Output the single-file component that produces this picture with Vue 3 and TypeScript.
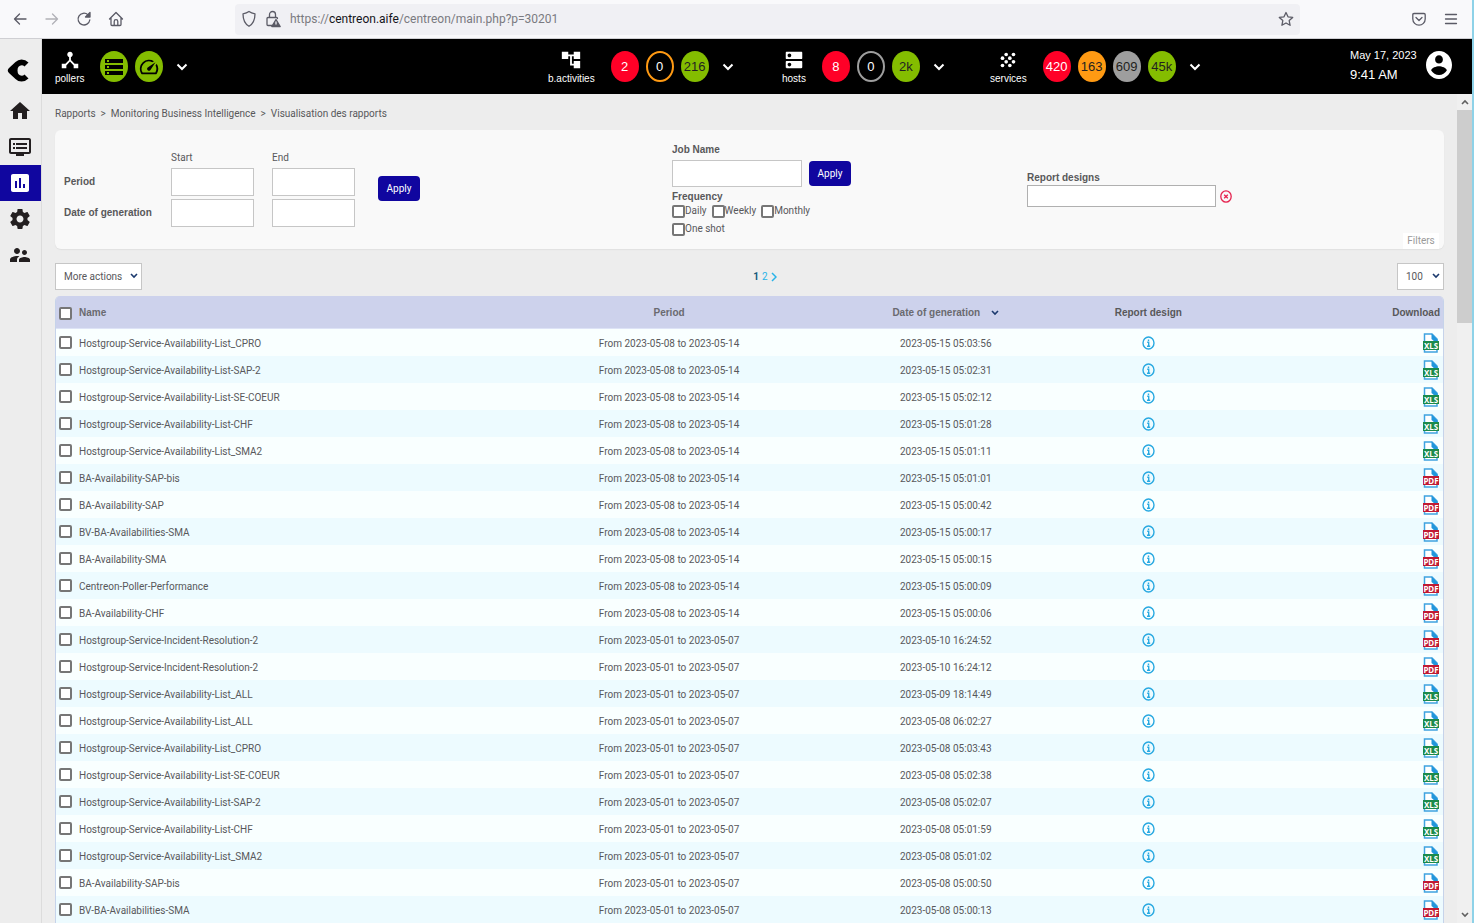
<script setup lang="ts">
import { ref } from 'vue'

type Tone = 'red' | 'green' | 'orange' | 'grey' | 'ring-orange' | 'ring-grey'
interface Counter { value: string; tone: Tone }
interface StatusGroup { label: string; icon: 'tree' | 'hosts' | 'grain'; counters: Counter[] }
interface Report { name: string; period: string; date: string; type: 'XLS' | 'PDF' }

const groups: StatusGroup[] = [
  { label: 'b.activities', icon: 'tree', counters: [
    { value: '2', tone: 'red' }, { value: '0', tone: 'ring-orange' }, { value: '216', tone: 'green' }] },
  { label: 'hosts', icon: 'hosts', counters: [
    { value: '8', tone: 'red' }, { value: '0', tone: 'ring-grey' }, { value: '2k', tone: 'green' }] },
  { label: 'services', icon: 'grain', counters: [
    { value: '420', tone: 'red' }, { value: '163', tone: 'orange' }, { value: '609', tone: 'grey' }, { value: '45k', tone: 'green' }] },
]

const week19 = 'From 2023-05-08 to 2023-05-14'
const week18 = 'From 2023-05-01 to 2023-05-07'
const reports: Report[] = [
  { name: 'Hostgroup-Service-Availability-List_CPRO', period: week19, date: '2023-05-15 05:03:56', type: 'XLS' },
  { name: 'Hostgroup-Service-Availability-List-SAP-2', period: week19, date: '2023-05-15 05:02:31', type: 'XLS' },
  { name: 'Hostgroup-Service-Availability-List-SE-COEUR', period: week19, date: '2023-05-15 05:02:12', type: 'XLS' },
  { name: 'Hostgroup-Service-Availability-List-CHF', period: week19, date: '2023-05-15 05:01:28', type: 'XLS' },
  { name: 'Hostgroup-Service-Availability-List_SMA2', period: week19, date: '2023-05-15 05:01:11', type: 'XLS' },
  { name: 'BA-Availability-SAP-bis', period: week19, date: '2023-05-15 05:01:01', type: 'PDF' },
  { name: 'BA-Availability-SAP', period: week19, date: '2023-05-15 05:00:42', type: 'PDF' },
  { name: 'BV-BA-Availabilities-SMA', period: week19, date: '2023-05-15 05:00:17', type: 'PDF' },
  { name: 'BA-Availability-SMA', period: week19, date: '2023-05-15 05:00:15', type: 'PDF' },
  { name: 'Centreon-Poller-Performance', period: week19, date: '2023-05-15 05:00:09', type: 'PDF' },
  { name: 'BA-Availability-CHF', period: week19, date: '2023-05-15 05:00:06', type: 'PDF' },
  { name: 'Hostgroup-Service-Incident-Resolution-2', period: week18, date: '2023-05-10 16:24:52', type: 'PDF' },
  { name: 'Hostgroup-Service-Incident-Resolution-2', period: week18, date: '2023-05-10 16:24:12', type: 'PDF' },
  { name: 'Hostgroup-Service-Availability-List_ALL', period: week18, date: '2023-05-09 18:14:49', type: 'XLS' },
  { name: 'Hostgroup-Service-Availability-List_ALL', period: week18, date: '2023-05-08 06:02:27', type: 'XLS' },
  { name: 'Hostgroup-Service-Availability-List_CPRO', period: week18, date: '2023-05-08 05:03:43', type: 'XLS' },
  { name: 'Hostgroup-Service-Availability-List-SE-COEUR', period: week18, date: '2023-05-08 05:02:38', type: 'XLS' },
  { name: 'Hostgroup-Service-Availability-List-SAP-2', period: week18, date: '2023-05-08 05:02:07', type: 'XLS' },
  { name: 'Hostgroup-Service-Availability-List-CHF', period: week18, date: '2023-05-08 05:01:59', type: 'XLS' },
  { name: 'Hostgroup-Service-Availability-List_SMA2', period: week18, date: '2023-05-08 05:01:02', type: 'XLS' },
  { name: 'BA-Availability-SAP-bis', period: week18, date: '2023-05-08 05:00:50', type: 'PDF' },
  { name: 'BV-BA-Availabilities-SMA', period: week18, date: '2023-05-08 05:00:13', type: 'PDF' },
]

const frequencies = ['Daily', 'Weekly', 'Monthly', 'One shot']
const selected = ref<number[]>([])
const jobName = ref('')

function toggleAll(event: Event) {
  selected.value = (event.target as HTMLInputElement).checked ? reports.map((_, i) => i) : []
}
</script>

<template>
  <div class="window">
    <header class="browser">
      <nav class="browser-nav">
        <button type="button" aria-label="Back"><svg width="16" height="16" viewBox="0 0 16 16" class="stroke"><path d="M14 8H2.5M7.5 3l-5 5 5 5" /></svg></button>
        <button type="button" aria-label="Forward" disabled><svg width="16" height="16" viewBox="0 0 16 16" class="stroke faded"><path d="M2 8h11.5M8.500 3l5 5-5 5" /></svg></button>
        <button type="button" aria-label="Reload"><svg width="16" height="16" viewBox="0 0 16 16" class="stroke"><path d="M13.800 9a5.900 5.900 0 1 1-1.900-5.300L13.500 5" /><path d="M14 1.500V6H9.500z" class="solid" /></svg></button>
        <button type="button" aria-label="Home"><svg width="16" height="16" viewBox="0 0 16 16" class="stroke"><path d="M1.500 8 8 1.500 14.500 8M3 7v6.500q0 1 1 1h8q1 0 1-1V7M6.200 14.500v-4a1.800 1.800 0 0 1 3.600 0v4" /></svg></button>
      </nav>
      <div class="address">
        <svg width="16" height="18" viewBox="0 0 16 18" class="stroke"><path d="M8 1.500C6 3 4 3.500 2 3.800c0 6 1.500 10 6 12.500 4.500-2.500 6-6.500 6-12.500-2-.3-4-.8-6-2.300z" /></svg>
        <svg width="16" height="18" viewBox="0 0 16 18" class="stroke"><path d="M4.500 7.500v-3a3 3 0 0 1 6 0v3M7 15.500H3q-1 0-1-1v-6q0-1 1-1h8.500q1 0 1 1" /><path d="M11 9.500 6.800 16.500h8.400z" class="solid" /><path d="M11 12v2" class="mark" /></svg>
        <span class="url">https://<b>centreon.aife</b>/centreon/main.php?p=30201</span>
        <button type="button" class="star" aria-label="Bookmark"><svg width="16" height="16" viewBox="0 0 16 16" class="stroke"><path d="m8 1.500 2 4.300 4.700.6-3.500 3.200.9 4.700L8 12l-4.100 2.300.9-4.700L1.300 6.400 6 5.800z" /></svg></button>
      </div>
      <div class="browser-tools">
        <button type="button" aria-label="Save to Pocket"><svg width="16" height="16" viewBox="0 0 16 16" class="stroke"><path d="M3 2.500h10q1.200 0 1.200 1.200V8a6.200 6.200 0 0 1-12.400 0V3.700q0-1.200 1.200-1.200zM5 6.500l3 3 3-3" /></svg></button>
        <button type="button" aria-label="Menu"><svg width="16" height="16" viewBox="0 0 16 16" class="stroke"><path d="M2.500 3.500h11M2.500 8h11M2.500 12.500h11" /></svg></button>
      </div>
    </header>

    <div class="app">
      <aside class="sidebar">
        <a href="#" class="logo" aria-label="Centreon"><svg width="22" height="24" viewBox="0 0 22 24"><path d="M21.500 4.500Q18.500 1.500 14.500 1.500 11 1.500 8.500 4L2 10Q-.5 12.500 2 15l6.500 6Q11 23.500 14.500 23.500q4 0 7-3L17.500 16.500Q16.300 17.700 14.800 17.700 10.500 17.200 10.500 12.500T14.800 7.300Q16.300 7.300 17.500 8.500z" /></svg></a>
        <a href="#" aria-label="Home"><svg width="24" height="24" viewBox="0 0 24 24"><path d="M10 20v-6h4v6h5v-8h3L12 3 2 12h3v8z" /></svg></a>
        <a href="#" aria-label="Monitoring"><svg width="24" height="24" viewBox="0 0 24 24"><path d="M21 3H3c-1.100 0-2 .9-2 2v12c0 1.100.9 2 2 2h5v2h8v-2h5c1.100 0 2-.9 2-2V5c0-1.100-.9-2-2-2zm0 14H3V5h18v12zm-2-9H8v2h11V8zm0 4H8v2h11v-2zM7 8H5v2h2V8zm0 4H5v2h2v-2z" /></svg></a>
        <a href="#" class="active" aria-label="Reporting"><svg width="24" height="24" viewBox="0 0 24 24"><path d="M19 3H5c-1.100 0-2 .9-2 2v14c0 1.100.9 2 2 2h14c1.100 0 2-.9 2-2V5c0-1.100-.9-2-2-2zM9 17H7v-7h2v7zm4 0h-2V7h2v10zm4 0h-2v-4h2v4z" /></svg></a>
        <a href="#" aria-label="Configuration"><svg width="24" height="24" viewBox="0 0 24 24"><path d="M19.430 12.980c.04-.32.07-.64.07-.98s-.03-.66-.07-.98l2.110-1.650c.19-.15.24-.42.12-.64l-2-3.460c-.12-.22-.39-.3-.61-.22l-2.490 1c-.52-.4-1.080-.73-1.690-.98l-.38-2.650C14.460 2.180 14.250 2 14 2h-4c-.25 0-.46.18-.49.42l-.38 2.650c-.61.25-1.170.59-1.690.98l-2.490-1c-.23-.09-.49 0-.61.22l-2 3.460c-.13.22-.07.49.12.64l2.110 1.650c-.04.32-.07.65-.07.98s.03.66.07.98l-2.110 1.650c-.19.15-.24.42-.12.64l2 3.460c.12.22.39.3.61.22l2.490-1c.52.4 1.080.73 1.690.98l.38 2.650c.03.24.24.42.49.42h4c.25 0 .46-.18.49-.42l.38-2.650c.61-.25 1.170-.59 1.690-.98l2.490 1c.23.09.49 0 .61-.22l2-3.460c.12-.22.07-.49-.12-.64l-2.110-1.650zM12 15.500c-1.930 0-3.500-1.570-3.500-3.500s1.570-3.500 3.500-3.500 3.500 1.570 3.500 3.500-1.570 3.500-3.500 3.500z" /></svg></a>
        <a href="#" aria-label="Administration"><svg width="24" height="24" viewBox="0 0 24 24"><path d="M16.500 12c1.380 0 2.490-1.120 2.490-2.500S17.880 7 16.500 7 14 8.120 14 9.500s1.120 2.500 2.500 2.500zM9 11c1.660 0 2.990-1.340 2.990-3S10.660 5 9 5 6 6.340 6 8s1.340 3 3 3zm7.500 3c-1.830 0-5.500.92-5.500 2.750V19h11v-2.250c0-1.830-3.670-2.750-5.500-2.750zM9 13c-2.330 0-7 1.170-7 3.500V19h7v-2.250c0-.85.33-2.340 2.370-3.470C10.500 13.100 9.660 13 9 13z" /></svg></a>
      </aside>

      <div class="main">
        <div class="topbar">
          <div class="group">
            <div class="service">
              <svg width="22" height="22" viewBox="0 0 24 24"><path d="M17 16l-4-4V8.820C14.160 8.400 15 7.300 15 6c0-1.660-1.340-3-3-3S9 4.340 9 6c0 1.300.84 2.400 2 2.820V12l-4 4H3v5h5v-3.050l4-4.200 4 4.200V21h5v-5h-4z" /></svg>
              <span>pollers</span>
            </div>
            <div class="circles">
              <span class="circle green"><svg width="20" height="18" viewBox="0 0 20 18"><path d="M1 1h18v4H1zM1 7h18v4H1zM1 13h18v4H1z" /><path d="M3 3h2M3 9h2M3 15h2" stroke="#84bd00" stroke-width="2" /></svg></span>
              <span class="circle green"><svg width="22" height="22" viewBox="0 0 24 24"><path d="m20.380 8.570-1.230 1.850a8 8 0 0 1-.22 7.580H5.070A8 8 0 0 1 15.580 6.850l1.850-1.230A10 10 0 0 0 3.350 19a2 2 0 0 0 1.720 1h13.850a2 2 0 0 0 1.740-1 10 10 0 0 0-.27-10.440zm-9.790 6.840a2 2 0 0 0 2.830 0l5.660-8.490-8.490 5.660a2 2 0 0 0 0 2.830z" /></svg></span>
            </div>
            <button type="button" class="more" aria-label="Poller details"><svg width="12" height="8" viewBox="0 0 12 8"><path d="m1.500 1.500 4.500 4.500 4.500-4.500" /></svg></button>
          </div>

          <div v-for="g in groups" :key="g.label" class="group">
            <div class="service">
              <svg v-if="g.icon === 'tree'" width="22" height="22" viewBox="0 0 24 24"><path d="M22 11V3h-7v3H9V3H2v8h7V8h2v10h4v3h7v-8h-7v3h-2V8h2v3z" /></svg>
              <svg v-else-if="g.icon === 'hosts'" width="22" height="22" viewBox="0 0 24 24"><path d="M20 13H4c-.55 0-1 .45-1 1v6c0 .55.45 1 1 1h16c.55 0 1-.45 1-1v-6c0-.55-.45-1-1-1zM7 19c-1.100 0-2-.9-2-2s.9-2 2-2 2 .9 2 2-.9 2-2 2zM20 3H4c-.55 0-1 .45-1 1v6c0 .55.45 1 1 1h16c.55 0 1-.45 1-1V4c0-.55-.45-1-1-1zM7 9c-1.100 0-2-.9-2-2s.9-2 2-2 2 .9 2 2-.9 2-2 2z" /></svg>
              <svg v-else width="22" height="22" viewBox="0 0 24 24"><g><circle cx="10" cy="6" r="2" /><circle cx="18" cy="6" r="2" /><circle cx="6" cy="10" r="2" /><circle cx="14" cy="10" r="2" /><circle cx="10" cy="14" r="2" /><circle cx="18" cy="14" r="2" /><circle cx="6" cy="18" r="2" /><circle cx="14" cy="18" r="2" /></g></svg>
              <span>{{ g.label }}</span>
            </div>
            <div class="circles">
              <a v-for="(c, i) in g.counters" :key="i" href="#" class="circle" :class="c.tone">{{ c.value }}</a>
            </div>
            <button type="button" class="more" :aria-label="g.label + ' details'"><svg width="12" height="8" viewBox="0 0 12 8"><path d="m1.500 1.500 4.500 4.500 4.500-4.500" /></svg></button>
          </div>

          <div class="account">
            <div class="clock"><span>May 17, 2023</span><span class="time">9:41 AM</span></div>
            <button type="button" aria-label="Profile"><svg width="26" height="28" viewBox="2 2 20 20" preserveAspectRatio="none"><path d="M12 2C6.480 2 2 6.480 2 12s4.480 10 10 10 10-4.480 10-10S17.520 2 12 2zm0 3c1.660 0 3 1.340 3 3s-1.340 3-3 3-3-1.340-3-3 1.340-3 3-3zm0 14.200c-2.500 0-4.710-1.280-6-3.220.03-1.990 4-3.080 6-3.080 1.990 0 5.970 1.090 6 3.080-1.290 1.940-3.500 3.220-6 3.220z" /></svg></button>
          </div>
        </div>

        <div class="viewport">
          <main class="content">
            <nav class="crumbs" aria-label="Breadcrumb">
              <a href="#">Rapports</a><span>&gt;</span><a href="#">Monitoring Business Intelligence</a><span>&gt;</span><a href="#">Visualisation des rapports</a>
            </nav>

            <form class="filters" @submit.prevent>
              <div class="dates">
                <div class="date-grid">
                  <span></span><span>Start</span><span>End</span>
                  <b>Period</b><input type="text" aria-label="Period start"><input type="text" aria-label="Period end">
                  <b>Date of generation</b><input type="text" aria-label="Generation start"><input type="text" aria-label="Generation end">
                </div>
                <button type="submit" class="apply">Apply</button>
              </div>
              <div class="job">
                <label for="job"><b>Job Name</b></label>
                <div class="job-row">
                  <input id="job" v-model="jobName" type="text">
                  <button type="submit" class="apply">Apply</button>
                </div>
                <fieldset>
                  <legend>Frequency</legend>
                  <label v-for="f in frequencies" :key="f"><input type="checkbox">{{ f }}</label>
                </fieldset>
              </div>
              <div class="designs">
                <label for="designs"><b>Report designs</b></label>
                <div class="design-row">
                  <input id="designs" type="text">
                  <button type="button" aria-label="Clear designs"><svg width="12" height="13" viewBox="0 0 12 13"><ellipse cx="6" cy="6.500" rx="5.200" ry="5.600" /><path d="m4.200 4.700 3.600 3.600M7.800 4.700 4.200 8.300" /></svg></button>
                </div>
              </div>
              <button type="button" class="filters-tab">Filters</button>
            </form>

            <div class="toolbar">
              <span class="picker actions">
                <select aria-label="More actions"><option>More actions</option></select>
                <svg width="8" height="6" viewBox="0 0 8 6"><path d="m1 1 3 3 3-3" /></svg>
              </span>
              <nav class="pages" aria-label="Pages">
                <b>1</b><a href="#">2</a>
                <a href="#" aria-label="Next page"><svg width="6" height="10" viewBox="0 0 6 10"><path d="m1 1 4 4-4 4" /></svg></a>
              </nav>
              <span class="picker size">
                <select aria-label="Rows per page"><option>100</option></select>
                <svg width="8" height="6" viewBox="0 0 8 6"><path d="m1 1 3 3 3-3" /></svg>
              </span>
            </div>

            <table>
              <colgroup><col class="c-check"><col><col class="c-period"><col class="c-date"><col class="c-design"><col class="c-download"></colgroup>
              <thead>
                <tr>
                  <th><input type="checkbox" aria-label="Select all" @change="toggleAll"></th>
                  <th class="name">Name</th>
                  <th>Period</th>
                  <th><span class="sorted">Date of generation<svg width="8" height="6" viewBox="0 0 8 6"><path d="m1 1 3 3 3-3" /></svg></span></th>
                  <th class="dark">Report design</th>
                  <th class="download dark">Download</th>
                </tr>
              </thead>
              <tbody>
                <tr v-for="(r, i) in reports" :key="i">
                  <td><input v-model="selected" type="checkbox" :value="i" :aria-label="'Select ' + r.name"></td>
                  <td class="name">{{ r.name }}</td>
                  <td class="text">{{ r.period }}</td>
                  <td class="text">{{ r.date }}</td>
                  <td><button type="button" class="info" aria-label="Report design details"><svg width="13" height="14" viewBox="0 0 13 14"><ellipse cx="6.500" cy="7" rx="5.500" ry="6" /><path d="M6.500 3.400v1.500M5.200 6.300h1.500v3.900M5 10.300h3.200" /></svg></button></td>
                  <td class="download">
                    <a href="#" :class="r.type.toLowerCase()">
                      <svg width="18" height="20" viewBox="0 0 18 20">
                        <path class="page" d="M2.500 1h7.500l5 5V19h-12.500z" />
                        <path class="fold" d="M9.500 .5 15.700 6.700v2.300H13L9.500 6z" />
                        <rect class="tag" x="1" y="8" width="16" height="9" />
                        <text x="9" y="16" text-anchor="middle">{{ r.type }}</text>
                      </svg>
                    </a>
                  </td>
                </tr>
              </tbody>
            </table>
          </main>
          <div class="scrollbar">
            <svg width="8" height="6" viewBox="0 0 8 6"><path d="m1 5 3-3 3 3" /></svg>
            <div class="thumb"></div>
            <svg width="8" height="6" viewBox="0 0 8 6"><path d="m1 1 3 3 3-3" /></svg>
          </div>
        </div>
      </div>
    </div>
  </div>
</template>

<style>
body { margin: 0; overflow: hidden; }
</style>

<style scoped>
* { box-sizing: border-box; }
.window {
  display: flex; flex-direction: column; height: 100vh; overflow: hidden;
  background: #ededed; border-right: 2px solid #8ed2e8; color: #58585b;
  font: 10px/14px Roboto, "Liberation Sans", Arial, sans-serif;
}
button { margin: 0; padding: 0; border: 0; background: none; color: inherit; font: inherit; cursor: pointer; display: flex; align-items: center; justify-content: center; }
a { color: inherit; text-decoration: none; }
svg { display: block; flex: none; }
input, select { margin: 0; font: inherit; color: inherit; }
input[type="text"] { border: 1px solid #c6c6c6; background: #fff; padding: 0 4px; height: 28px; min-width: 0; }
input[type="checkbox"] { appearance: none; width: 13px; height: 13px; flex: none; border: 2px solid #767676; border-radius: 2px; background: #fff; display: block; }
input[type="checkbox"]:checked { background: #10069f; }

.browser { display: flex; align-items: center; flex: none; height: 39px; background: #f9f9fb; border-bottom: 1px solid #cfcfd3; }
.browser-nav { display: flex; gap: 16px; padding-left: 12px; width: 235px; }
.stroke { fill: none; stroke: #5b5b66; stroke-width: 1.3; stroke-linejoin: round; stroke-linecap: round; }
.solid { fill: #5b5b66; }
.mark { stroke: #f0f0f4; }
.faded { opacity: .45; }
.address { flex: 1; display: flex; align-items: center; gap: 8px; height: 31px; padding: 0 6px; background: #f0f0f4; border-radius: 4px; }
.url { flex: 1; padding-left: 1px; color: #7a7a80; font-size: 12px; line-height: 16px; }
.url b { font-weight: 400; color: #15141a; }
.browser-tools { display: flex; justify-content: flex-end; gap: 16px; width: 172px; padding-right: 13px; }

.app { flex: 1; display: flex; min-height: 0; }
.sidebar { width: 42px; flex: none; border-right: 1px solid #dcdcdc; }
.sidebar a { display: flex; align-items: center; height: 36px; padding-left: 8px; fill: #231f20; }
.sidebar .logo { height: 54px; padding: 7px 0 0 7px; fill: #000; }
.sidebar .active { background: #10069f; fill: #fff; }
.main { flex: 1; min-width: 0; display: flex; flex-direction: column; }

.topbar { display: grid; grid-template-columns: 493fr 234fr 208fr 360fr 122fr; align-items: center; flex: none; height: 55px; padding-left: 13px; background: #000; color: #fff; font-family: "Liberation Sans", Arial, sans-serif; }
.group { display: flex; align-items: center; }
.service { display: flex; flex-direction: column; align-items: center; fill: #fff; font-size: 10px; line-height: 12px; margin-right: 16px; gap: 2px; }
.circles { display: flex; gap: 7px; }
.circle { display: flex; align-items: center; justify-content: center; width: 28px; height: 31px; border-radius: 50%; font-size: 13px; color: #231f20; }
.green { background: #84bd00; }
.red { background: #ff0027; color: #fff; }
.orange { background: #ff9a13; }
.grey { background: #9e9e9e; }
.ring-orange { border: 2px solid #ff9a13; color: #fff; }
.ring-grey { border: 2px solid #9e9e9e; color: #fff; }
.more { margin-left: 13px; }
.more path { fill: none; stroke: #fff; stroke-width: 2; }
.account { display: flex; align-items: center; gap: 9px; padding-bottom: 3px; fill: #fff; }
.clock { display: flex; flex-direction: column; font-size: 11px; line-height: 19px; white-space: nowrap; }
.time { font-size: 13px; }

.viewport { flex: 1; display: flex; min-height: 0; }
.content { flex: 1; min-width: 0; overflow: hidden; padding: 0 13px; }
.crumbs { display: flex; gap: 5px; padding: 13px 0 9px; }
.filters { position: relative; display: grid; grid-template-columns: 617fr 355fr 417fr; height: 119px; background: #f9f9f9; border-radius: 6px; box-shadow: 0 1px 1px #e0e0e0; }
.filters b, legend, th { font: bold 10px/14px "Liberation Sans", Arial, sans-serif; color: #58585a; }
.dates { display: flex; align-items: center; gap: 23px; padding: 0 0 2px 9px; }
.date-grid { display: grid; grid-template-columns: 107px 101px 83px; grid-template-rows: 14px 28px 28px; row-gap: 3px; align-items: center; }
.date-grid input { width: 83px; }
.apply { width: 42px; height: 25px; background: #10069f; color: #fff; border-radius: 4px; }
.job { padding-top: 13px; }
.job > label { display: block; }
.job-row { display: flex; align-items: center; gap: 7px; margin: 3px 0; }
.job-row input { width: 130px; height: 27px; }
fieldset { display: flex; flex-wrap: wrap; gap: 4px 5px; margin: 0; padding: 0; border: 0; width: 150px; }
legend { padding: 0; }
fieldset label { display: flex; align-items: center; }
.designs { padding-top: 41px; }
.design-row { display: flex; align-items: center; gap: 4px; }
.design-row input { width: 189px; height: 22px; border-color: #b0b0b0; }
.design-row svg { fill: none; stroke: #e5234f; stroke-width: 1.3; }
.filters-tab { position: absolute; right: 5px; bottom: 0; width: 36px; height: 16px; background: #fff; color: #9a9a9a; }

.toolbar { display: flex; justify-content: space-between; align-items: center; padding: 14px 0 6px; }
.picker { position: relative; display: flex; }
.picker select { appearance: none; height: 27px; border: 1px solid #c6c6c6; border-radius: 0; background: #fff; padding: 0 8px; }
.actions select { width: 87px; }
.size select { width: 47px; }
.picker svg { position: absolute; right: 4px; top: 10px; pointer-events: none; }
.picker path, .sorted path { fill: none; stroke: #1c3a6e; stroke-width: 1.600; }
.pages { display: flex; align-items: center; gap: 3px; padding-right: 9px; color: #29b3e8; }
.pages b { color: #175a7c; }
.pages path { fill: none; stroke: #29b3e8; stroke-width: 1.500; }

table { width: 100%; table-layout: fixed; border-collapse: separate; border-spacing: 0; border: 1px solid #c6d3ea; border-top: 0; border-radius: 5px 5px 0 0; overflow: hidden; }
.c-check { width: 23px; }
.c-period { width: 26.2%; }
.c-date { width: 13.7%; }
.c-design { width: 15.5%; }
.c-download { width: 13.5%; }
th { height: 33px; padding: 2px 0 0; background: #cdd2ec; color: #6a6a70; border-bottom: 1px solid #dde3f6; }
th.dark { color: #58585a; }
td { height: 27px; padding: 0; text-align: center; background: #f9ffff; }
td.name, td.text { padding-top: 2px; }
tr:nth-child(even) td { background: #edfbff; }
th input[type="checkbox"], td input[type="checkbox"] { margin-left: 3px; }
.name { text-align: left; }
.sorted { display: inline-flex; align-items: center; gap: 11px; }
.info { margin: 0 auto; }
.info svg { fill: none; stroke: #29a9e1; stroke-width: 1.400; }
.download { text-align: right; padding-right: 3px; }
.download a { display: flex; justify-content: flex-end; }
.page { fill: #fff; stroke: #3fa3e0; stroke-width: 1.500; }
.fold { fill: #2196db; }
.xls .tag { fill: #1b8a4b; }
.pdf .tag { fill: #c01a33; }
text { fill: #fff; font: bold 9px "Noto Sans", "Open Sans", sans-serif; font-size: 8px; }

.scrollbar { width: 15px; flex: none; display: flex; flex-direction: column; align-items: center; padding: 5px 0; background: #f0f0f0; gap: 5px; }
.scrollbar path { fill: none; stroke: #606060; stroke-width: 1.600; }
.thumb { width: 100%; height: 26%; background: #cdcdcd; margin-bottom: auto; }
</style>
